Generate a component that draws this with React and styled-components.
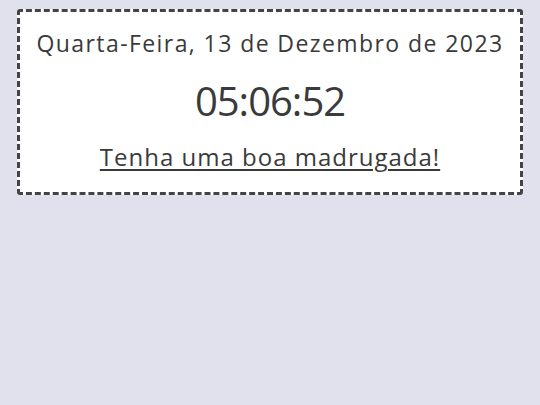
import React from "react";
import styled, { createGlobalStyle } from "styled-components";

const Global = createGlobalStyle`
  html, body { margin: 0; padding: 0; background: #e1e1ee; }
  body { font-family: "Open Sans", "DejaVu Sans", sans-serif; color: #3a3a3a; }
`;

const Page = styled.div`
  padding: 9px 17px 0 17px;
`;

const Card = styled.div`
  background: #ffffff;
  border: 3px dashed #444444;
  border-radius: 3px;
  display: flex;
  flex-direction: column;
  align-items: center;
  padding: 16px 0 20px;
`;

const DateLine = styled.div`
  font-size: 23px;
  line-height: 30px;
  letter-spacing: 1.42px;
  color: #3a3a3a;
`;

const Time = styled.div`
  font-size: 40px;
  line-height: 48px;
  letter-spacing: -1px;
  margin-top: 19px;
  color: #3a3a3a;
`;

const Message = styled.div`
  font-size: 24px;
  line-height: 30px;
  letter-spacing: 1px;
  margin-top: 17px;
  text-decoration: underline;
  text-decoration-thickness: 2px;
  text-underline-offset: 3px;
  color: #3a3a3a;
`;

export default function App() {
  return (
    <>
      <Global />
      <Page>
        <Card>
          <DateLine>Quarta-Feira, 13 de Dezembro de 2023</DateLine>
          <Time>05:06:52</Time>
          <Message>Tenha uma boa madrugada!</Message>
        </Card>
      </Page>
    </>
  );
}
